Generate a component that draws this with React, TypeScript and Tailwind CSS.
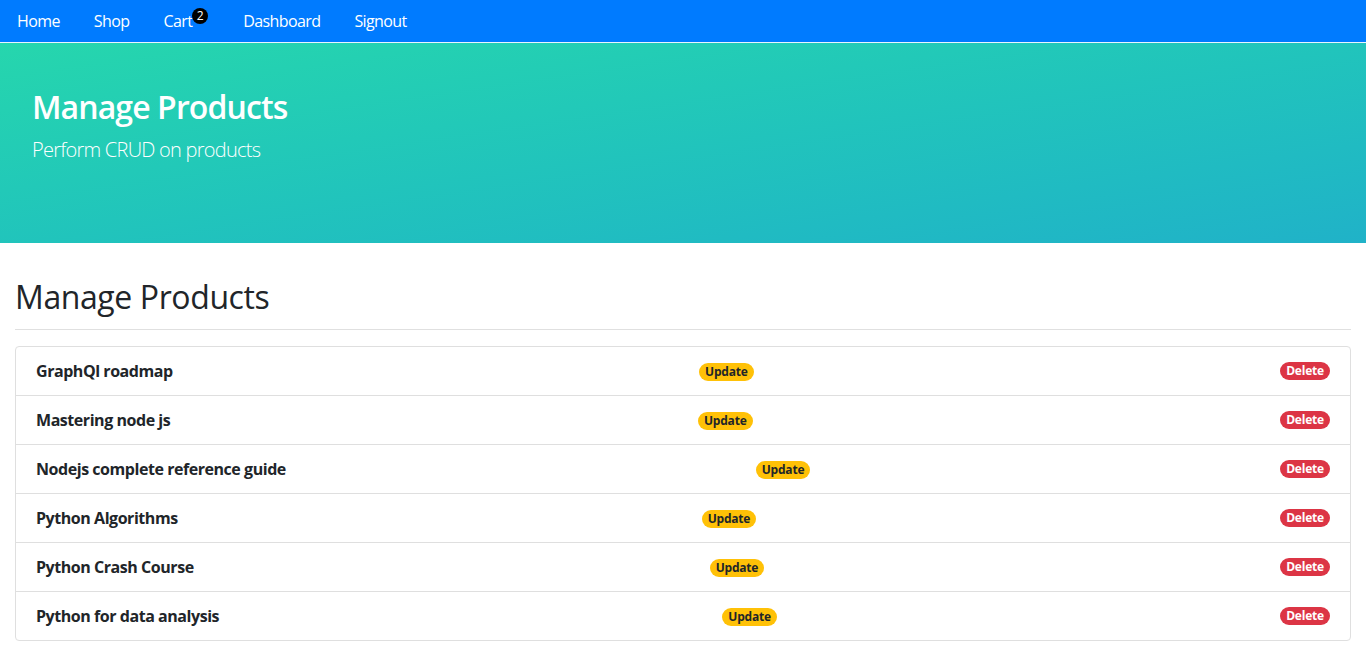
const products = [
  "GraphQl roadmap",
  "Mastering node js",
  "Nodejs complete reference guide",
  "Python Algorithms",
  "Python Crash Course",
  "Python for data analysis",
];

function Nav() {
  return (
    <nav className="bg-[#007bff] h-[43px] border-b border-[#e9f4ff]">
      <ul className="flex items-center h-[42px] tracking-[-0.6px]">
        <li>
          <a className="block px-[17px] py-2 text-white">Home</a>
        </li>
        <li>
          <a className="block px-[17px] py-2 text-white">Shop</a>
        </li>
        <li>
          <a className="relative block pl-[17px] pr-[34px] py-2 text-white">
            Cart
            <span className="absolute top-[7px] right-[18px] w-4 h-4 rounded-full bg-black text-white text-xs leading-4 text-center tracking-normal">
              2
            </span>
          </a>
        </li>
        <li>
          <a className="block px-[17px] py-2 text-white">Dashboard</a>
        </li>
        <li>
          <a className="block px-[17px] py-2 text-white">Signout</a>
        </li>
      </ul>
    </nav>
  );
}

export default function App() {
  return (
    <div className="font-['Open_Sans',sans-serif] text-[#212529] bg-white min-h-[667px]">
      <Nav />
      <div className="h-[200px] bg-gradient-to-br from-[#26d6ad] to-[#20b2c8] px-8 pt-[45px] text-white">
        <h2 className="text-[32px] font-semibold leading-[1.2] tracking-[-0.9px]">
          Manage Products
        </h2>
        <p className="text-[20px] font-light mt-[9px] tracking-[-0.75px]">
          Perform CRUD on products
        </p>
      </div>
      <div className="px-[15px] pt-[35px]">
        <h2 className="text-[32px] leading-[1.2] font-normal tracking-[-0.4px]">
          Manage Products
        </h2>
        <hr className="mt-[13px] mb-4 border-t border-[#e0e0e0]" />
        <ul className="border border-[#dfdfdf] rounded">
          {products.map((p, i) => (
            <li
              key={p}
              className={
                "flex justify-between items-center px-5 py-3 leading-6 " +
                (i > 0 ? "border-t border-[#dfdfdf]" : "")
              }
            >
              <strong className="font-bold tracking-[-0.45px]">{p}</strong>
              <span className="bg-[#ffc107] text-[#212529] text-xs font-bold rounded-full px-[6px] leading-[18px] mt-[2px] tracking-[-0.2px]">
                Update
              </span>
              <span className="bg-[#dc3545] text-white text-xs font-bold rounded-full px-[6px] leading-[18px] tracking-[-0.2px]">
                Delete
              </span>
            </li>
          ))}
        </ul>
      </div>
    </div>
  );
}
